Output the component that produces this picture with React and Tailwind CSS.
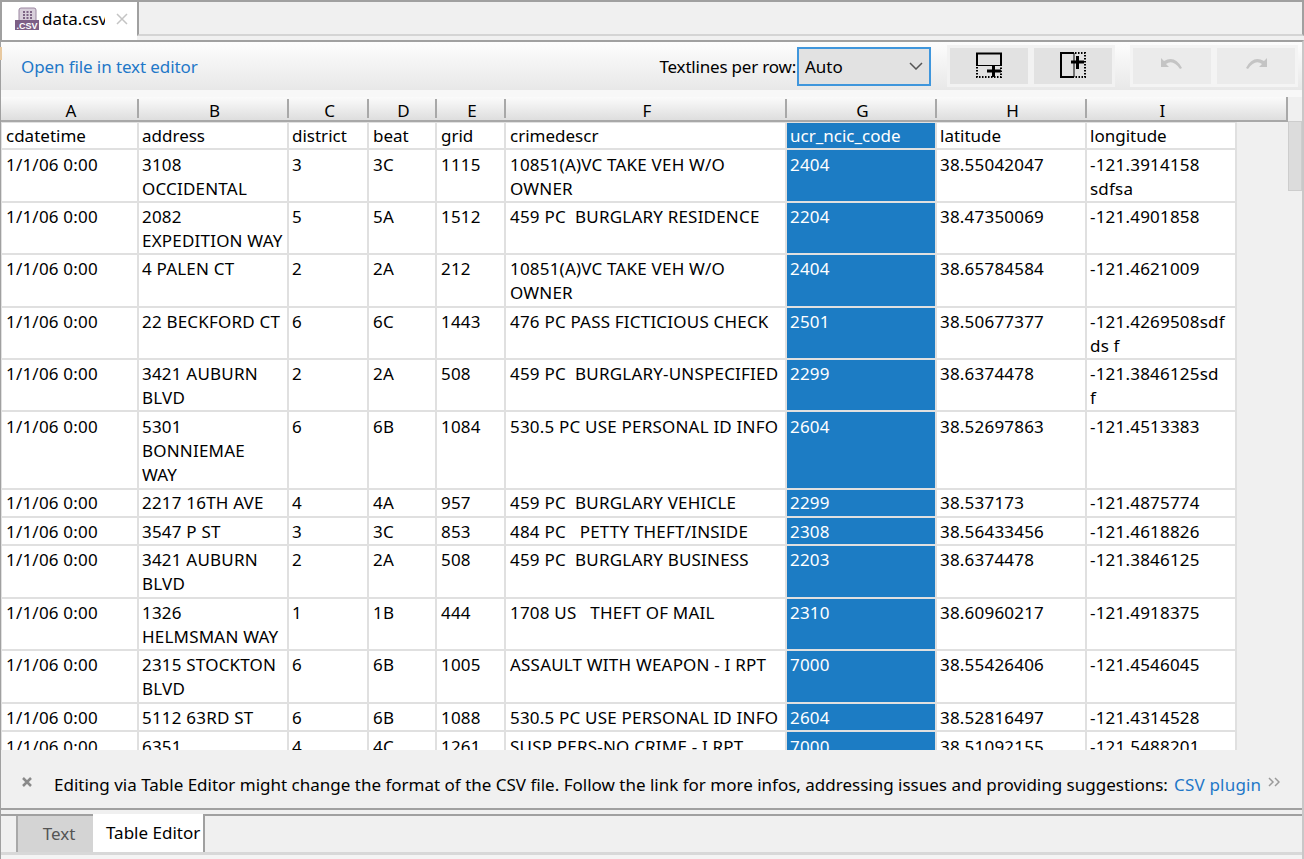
import React from 'react';

const FONT = "font-['Noto_Sans',sans-serif]";

const columns = [
  { label: 'A', width: 'w-[135px]', pad: 'pl-[4px]' },
  { label: 'B', width: 'w-[148px]', pad: 'pl-[3px]' },
  { label: 'C', width: 'w-[78px]', pad: 'pl-[3px]' },
  { label: 'D', width: 'w-[66px]', pad: 'pl-[4px]' },
  { label: 'E', width: 'w-[67px]', pad: 'pl-[4px]' },
  { label: 'F', width: 'w-[279px]', pad: 'pl-[4px]' },
  { label: 'G', width: 'w-[148px]', pad: 'pl-[3px]' },
  { label: 'H', width: 'w-[148px]', pad: 'pl-[3px]' },
  { label: 'I', width: 'w-[148px]', pad: 'pl-[3px]' },
];

const rows = [
  { h: 'h-[25px]', pt: 'pt-[1px]', cells: ['cdatetime', 'address', 'district', 'beat', 'grid', 'crimedescr', 'ucr_ncic_code', 'latitude', 'longitude'] },
  { h: 'h-[51px]', pt: 'pt-[3px]', cells: ['1/1/06 0:00', '3108\nOCCIDENTAL', '3', '3C', '1115', '10851(A)VC TAKE VEH W/O\nOWNER', '2404', '38.55042047', '-121.3914158\nsdfsa'] },
  { h: 'h-[50px]', pt: 'pt-[2px]', cells: ['1/1/06 0:00', '2082\nEXPEDITION WAY', '5', '5A', '1512', '459 PC  BURGLARY RESIDENCE', '2204', '38.47350069', '-121.4901858'] },
  { h: 'h-[51px]', pt: 'pt-[2px]', cells: ['1/1/06 0:00', '4 PALEN CT', '2', '2A', '212', '10851(A)VC TAKE VEH W/O\nOWNER', '2404', '38.65784584', '-121.4621009'] },
  { h: 'h-[50px]', pt: 'pt-[2px]', cells: ['1/1/06 0:00', '22 BECKFORD CT', '6', '6C', '1443', '476 PC PASS FICTICIOUS CHECK', '2501', '38.50677377', '-121.4269508sdf\nds f'] },
  { h: 'h-[50px]', pt: 'pt-[2px]', cells: ['1/1/06 0:00', '3421 AUBURN\nBLVD', '2', '2A', '508', '459 PC  BURGLARY-UNSPECIFIED', '2299', '38.6374478', '-121.3846125sd\nf'] },
  { h: 'h-[76px]', pt: 'pt-[3px]', cells: ['1/1/06 0:00', '5301\nBONNIEMAE\nWAY', '6', '6B', '1084', '530.5 PC USE PERSONAL ID INFO', '2604', '38.52697863', '-121.4513383'] },
  { h: 'h-[26px]', pt: 'pt-[1px]', cells: ['1/1/06 0:00', '2217 16TH AVE', '4', '4A', '957', '459 PC  BURGLARY VEHICLE', '2299', '38.537173', '-121.4875774'] },
  { h: 'h-[26px]', pt: 'pt-[2px]', cells: ['1/1/06 0:00', '3547 P ST', '3', '3C', '853', '484 PC   PETTY THEFT/INSIDE', '2308', '38.56433456', '-121.4618826'] },
  { h: 'h-[51px]', pt: 'pt-[2px]', cells: ['1/1/06 0:00', '3421 AUBURN\nBLVD', '2', '2A', '508', '459 PC  BURGLARY BUSINESS', '2203', '38.6374478', '-121.3846125'] },
  { h: 'h-[50px]', pt: 'pt-[2px]', cells: ['1/1/06 0:00', '1326\nHELMSMAN WAY', '1', '1B', '444', '1708 US   THEFT OF MAIL', '2310', '38.60960217', '-121.4918375'] },
  { h: 'h-[51px]', pt: 'pt-[2px]', cells: ['1/1/06 0:00', '2315 STOCKTON\nBLVD', '6', '6B', '1005', 'ASSAULT WITH WEAPON - I RPT', '7000', '38.55426406', '-121.4546045'] },
  { h: 'h-[26px]', pt: 'pt-[2px]', cells: ['1/1/06 0:00', '5112 63RD ST', '6', '6B', '1088', '530.5 PC USE PERSONAL ID INFO', '2604', '38.52816497', '-121.4314528'] },
  { h: 'h-[50px]', pt: 'pt-[3px]', cells: ['1/1/06 0:00', '6351\nGLENBROOK DR', '4', '4C', '1261', 'SUSP PERS-NO CRIME - I RPT', '7000', '38.51092155', '-121.5488201'] },
];

const CsvIcon = () => (
  <svg width="24" height="24" viewBox="0 0 24 24" className="shrink-0">
    <path d="M4 14 L4 3 Q4 1 6 1 L19 1 Q21 1 21 3 L21 14 Z" fill="#d8cfdb" stroke="#9a86a0" strokeWidth="1" />
    <path d="M8 4h2v2H8zM11.5 4h2v2h-2zM15 4h2v2h-2zM8 7h2v2H8zM11.5 7h2v2h-2zM15 7h2v2h-2zM8 10h2v2H8zM11.5 10h2v2h-2zM15 10h2v2h-2z" fill="#7d6585" />
    <rect x="0" y="13" width="24" height="10" fill="#7d5f86" />
    <text x="12" y="21.5" textAnchor="middle" fontSize="9" fontWeight="700" fontFamily="Liberation Sans, sans-serif" fill="#fff">.CSV</text>
  </svg>
);

const AddRowIcon = () => (
  <svg width="26" height="26" viewBox="0 0 26 26" className="mb-[2px] shrink-0">
    <path d="M1 14 V1.5 H25 V14" fill="none" stroke="#000" strokeWidth="2" />
    <path d="M1 13.5 H25" fill="none" stroke="#000" strokeWidth="1" />
    <path d="M1 15 V25 H25 V15" fill="none" stroke="#000" strokeWidth="2" strokeDasharray="1.5 1.5" />
    <path d="M11 19 H25 M17.5 13 V25" fill="none" stroke="#000" strokeWidth="3" />
  </svg>
);

const AddColIcon = () => (
  <svg width="26" height="26" viewBox="0 0 26 26" className="mb-[2px] shrink-0">
    <path d="M14 1 H1 V25 H14" fill="none" stroke="#000" strokeWidth="2" />
    <path d="M14 1 V25" fill="none" stroke="#000" strokeWidth="1" />
    <path d="M15 1 H25 V25 H15" fill="none" stroke="#000" strokeWidth="2" strokeDasharray="1.5 1.5" />
    <path d="M11 10 H24 M17.5 4 V17" fill="none" stroke="#000" strokeWidth="3" />
  </svg>
);

const UndoIcon = ({ flip }) => (
  <svg width="22" height="12" viewBox="0 0 22 12" className={flip ? 'mb-[4px] shrink-0 -scale-x-100' : 'mb-[4px] shrink-0'}>
    <path d="M0 0 L0 9 L8 9 L5 6 Q12 1 19 11 L21 10 Q14 -3 3 3 Z" fill="#c4c4c4" />
  </svg>
);

const ColumnHeader = () => (
  <div className="flex h-[25px] w-[1287px] shrink-0 border-b-[2px] border-r-[2px] border-[#a8a8a8] bg-gradient-to-b from-[#fbfbfb] to-[#dedede] pl-[1px]">
    {columns.map((col, i) => (
      <div key={col.label} className={`${col.width} relative mr-[2px] pl-[3px] text-center text-[17px] leading-[27px] text-black`}>
        {col.label}
        {i < 8 && <div className="absolute right-[-2px] top-[2px] h-[19px] w-[2px] bg-[#a8a8a8]" />}
      </div>
    ))}
  </div>
);

const DataRow = ({ row, index }) => (
  <div className={`flex ${row.h} shrink-0 gap-[2px] ${index > 0 ? 'tracking-[0.2px]' : ''}`}>
    {row.cells.map((text, i) => (
      <div
        key={i}
        className={`${columns[i].width} ${columns[i].pad} ${i === 6 ? 'bg-[#1c7cc4] text-white' : 'bg-white text-black'} ${row.pt} shrink-0 overflow-hidden whitespace-pre text-[17px] leading-[24px]`}
      >
        {text}
      </div>
    ))}
  </div>
);

export default function App() {
  return (
    <div className={`${FONT} flex h-[859px] w-[1304px] flex-col overflow-hidden bg-[#f0f0f0] text-[17px] text-black`}>
      {/* editor tab strip */}
      <div className="flex h-[40px] shrink-0 border-t-[2px] border-[#a0a0a0]">
        <div className="flex h-[38px] w-[137px] items-start gap-[3px] border-l-[2px] border-[#a0a0a0] bg-white pl-[13px] pt-[5px]">
          <CsvIcon />
          <span className="w-[63px] overflow-hidden whitespace-nowrap leading-[24px]">data.csv</span>
          <svg width="12" height="12" viewBox="0 0 12 12" className="ml-[8px] mt-[6px] shrink-0">
            <path d="M1 1 L11 11 M11 1 L1 11" stroke="#c4c4c4" strokeWidth="1.5" />
          </svg>
        </div>
        <div className="h-[34px] flex-1 border-b-[2px] border-l-[2px] border-r-[2px] border-[#d4d4d4] border-l-[#a0a0a0] border-r-[#a0a0a0] bg-[#f0f0f0]" />
      </div>

      <div className="flex min-h-0 flex-1 flex-col border-l-[1px] border-r-[2px] border-t-[2px] border-[#a0a0a0] border-r-[#c8c8c8]">
        {/* toolbar */}
        <div className="relative flex h-[48px] shrink-0 items-center bg-gradient-to-b from-[#fdfdfd] to-[#e8e8e8] pl-[20px] pr-[4px]">
          <div className="absolute left-[-1px] top-[5px] h-[13px] w-[2px] bg-[#e8c9a0]" />
          <span className="pt-[2px] tracking-[-0.1px] text-[#1f78c8]">Open file in text editor</span>
          <span className="ml-auto whitespace-nowrap pt-[2px] tracking-[-0.2px]">Textlines per row:</span>
          <div className="ml-[1px] flex h-[39px] w-[134px] items-center justify-between border-[2px] border-[#3f96dc] bg-[#e2e2e2] pl-[6px] pr-[6px]">
            <span className="pt-[2px]">Auto</span>
            <svg width="14" height="8" viewBox="0 0 14 8"><path d="M1 1 L7 7 L13 1" fill="none" stroke="#555" strokeWidth="1.5" /></svg>
          </div>
          <div className="ml-[16px] flex h-[42px] w-[168px] gap-[6px] bg-[#f2f2f2] p-[3px]">
            <div className="flex flex-1 items-center justify-center bg-[#e2e2e2]"><AddRowIcon /></div>
            <div className="flex flex-1 items-center justify-center bg-[#e2e2e2]"><AddColIcon /></div>
          </div>
          <div className="ml-[15px] flex h-[42px] w-[168px] gap-[6px] bg-[#f4f4f4] p-[3px]">
            <div className="flex flex-1 items-center justify-center bg-[#ebebeb]"><UndoIcon /></div>
            <div className="flex flex-1 items-center justify-center bg-[#ebebeb]"><UndoIcon flip /></div>
          </div>
        </div>

        {/* table area */}
        <div className="flex h-[7px] shrink-0 bg-[#f8f8f8]" />
        <div className="flex min-h-0 flex-1">
          <div className="flex min-w-0 flex-1 flex-col overflow-hidden">
            <ColumnHeader />
            <div className="flex w-[1236px] flex-1 flex-col gap-[2px] overflow-hidden bg-[#e0e0e0] pl-[1px] pr-[1px] pt-[1px]">
              {rows.map((row, i) => <DataRow key={i} row={row} index={i} />)}
            </div>
          </div>
          <div className="w-[14px] shrink-0 bg-[#f0f0f0] pt-[24px]">
            <div className="h-[70px] w-[14px] border-[1px] border-[#cdcdcd] bg-[#dcdcdc]" />
          </div>
        </div>

        {/* notification bar */}
        <div className="flex h-[60px] shrink-0 items-center border-b-[2px] border-[#a0a0a0] bg-[#f0f0f0] pl-[20px] pt-[12px]">
          <svg width="12" height="12" viewBox="0 0 12 12" className="mb-[6px] shrink-0">
            <path d="M2 2 L10 10 M10 2 L2 10" stroke="#8a8a8a" strokeWidth="2.5" />
          </svg>
          <span className="ml-[21px] whitespace-nowrap">Editing via Table Editor might change the format of the CSV file. Follow the link for more infos, addressing issues and providing suggestions:</span>
          <span className="ml-[6px] whitespace-nowrap tracking-[0.2px] text-[#1f78c8]">CSV plugin</span>
          <svg width="12" height="10" viewBox="0 0 12 10" className="mb-[6px] ml-[7px] shrink-0">
            <path d="M1 1 L5 5 L1 9 M7 1 L11 5 L7 9" fill="none" stroke="#9a9a9a" strokeWidth="1.5" />
          </svg>
        </div>

        {/* bottom tabs */}
        <div className="mt-[4px] flex h-[38px] shrink-0 border-t-[2px] border-[#a0a0a0]">
          <div className="w-[15px] bg-[#f0f0f0]" />
          <div className="flex w-[77px] items-center justify-center border-l-[2px] border-[#a8a8a8] bg-[#d4d4d4] pl-[7px] text-[#555]">Text</div>
          <div className="mt-[-2px] flex w-[110px] items-center overflow-hidden whitespace-nowrap bg-white pl-[13px]">Table Editor</div>
          <div className="flex-1 border-l-[2px] border-[#a0a0a0] bg-[#f0f0f0]" />
        </div>
        <div className="h-[3px] shrink-0 bg-[#d8d8d8]" />
        <div className="h-[4px] shrink-0 bg-[#f4f4f4]" />
      </div>
    </div>
  );
}
